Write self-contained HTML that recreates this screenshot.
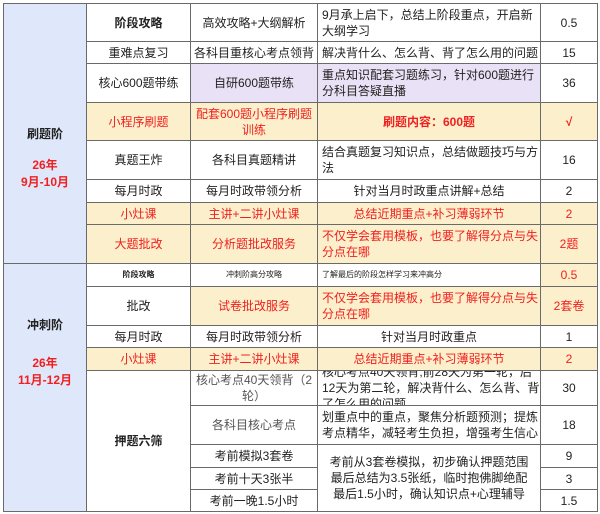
<!DOCTYPE html>
<html><head><meta charset="utf-8"><style>
body{margin:0;width:600px;height:514px;background:#fff;overflow:hidden;font-family:"Liberation Sans","Noto Sans CJK SC",sans-serif;}
#t{position:absolute;left:3px;top:3px;width:595px;height:509px;background:#6a6a6a;}
.c{position:absolute;background:#fff;display:flex;align-items:center;justify-content:center;text-align:center;font-size:12px;line-height:16px;color:#222;overflow:hidden;box-sizing:border-box;}
.l{justify-content:flex-start;text-align:left;padding-left:4px;}
.y{background:#fbf0cb;}
.p{background:#e9e1f6;}
.b{background:#dfe7fa;}
.r{color:#f02020;}
.bd{font-weight:bold;}
.s{font-size:8px;}
.a{position:absolute;left:0;width:82px;text-align:center;font-size:12px;line-height:16px;font-weight:bold;}
</style></head><body>
<div id="t"></div>
<div id="g"></div>
<script>
var X=[3,86,190,317,540,598];
var cells=[
[0,1,3,263,'<div class="a" style="top:122px;color:#222">刷题阶</div><div class="a r" style="top:153px">26年</div><div class="a r" style="top:170px">9月-10月</div>','b'],
[1,2,3,41,'阶段攻略','bd'],[2,3,3,41,'高效攻略+大纲解析',''],[3,4,3,41,'9月承上启下，总结上阶段重点，开启新大纲学习','l'],[4,5,3,41,'0.5',''],
[1,2,41,63,'重难点复习',''],[2,3,41,63,'各科目重核心考点领背',''],[3,4,41,63,'解决背什么、怎么背、背了怎么用的问题','l'],[4,5,41,63,'15',''],
[1,2,63,102,'核心600题带练',''],[2,3,63,102,'自研600题带练','p'],[3,4,63,102,'重点知识配套习题练习，针对600题进行分科目答疑直播','l p'],[4,5,63,102,'36',''],
[1,2,102,140,'小程序刷题','y r'],[2,3,102,140,'配套600题小程序刷题训练','y r'],[3,4,102,140,'刷题内容：600题','y r bd'],[4,5,102,140,'√','y r bd'],
[1,2,140,179,'真题王炸',''],[2,3,140,179,'各科目真题精讲',''],[3,4,140,179,'结合真题复习知识点，总结做题技巧与方法','l'],[4,5,140,179,'16',''],
[1,2,179,202,'每月时政',''],[2,3,179,202,'每月时政带领分析',''],[3,4,179,202,'针对当月时政重点讲解+总结',''],[4,5,179,202,'2',''],
[1,2,202,224,'小灶课','y r'],[2,3,202,224,'主讲+二讲小灶课','y r'],[3,4,202,224,'总结近期重点+补习薄弱环节','y r'],[4,5,202,224,'2','y r'],
[1,2,224,263,'大题批改','y r'],[2,3,224,263,'分析题批改服务','y r'],[3,4,224,263,'不仅学会套用模板，也要了解得分点与失分点在哪','l y r'],[4,5,224,263,'2题','y r'],
[0,1,263,511,'<div class="a" style="top:53px;color:#222">冲刺阶</div><div class="a r" style="top:91px">26年</div><div class="a r" style="top:108px">11月-12月</div>','b'],
[1,2,263,286,'阶段攻略','bd s'],[2,3,263,286,'冲刺阶高分攻略','s'],[3,4,263,286,'了解最后的阶段怎样学习来冲高分','l s'],[4,5,263,286,'0.5','y r'],
[1,2,286,325,'批改',''],[2,3,286,325,'试卷批改服务','y r'],[3,4,286,325,'不仅学会套用模板，也要了解得分点与失分点在哪','l y r'],[4,5,286,325,'2套卷','y r'],
[1,2,325,347,'每月时政',''],[2,3,325,347,'每月时政带领分析',''],[3,4,325,347,'针对当月时政重点',''],[4,5,325,347,'1',''],
[1,2,347,370,'小灶课','y r'],[2,3,347,370,'主讲+二讲小灶课','y r'],[3,4,347,370,'总结近期重点+补习薄弱环节','y r'],[4,5,347,370,'2','y r'],
[1,2,370,511,'押题六筛','bd'],
[2,3,370,405,'<span style="color:#555">核心考点40天领背（2轮）</span>',''],[3,4,370,405,'核心考点40天领背,前28天为第一轮，后12天为第二轮，解决背什么、怎么背、背了怎么用的问题','l'],[4,5,370,405,'30',''],
[2,3,405,444,'<span style="color:#555">各科目核心考点</span>',''],[3,4,405,444,'划重点中的重点，聚焦分析题预测；提炼考点精华，减轻考生负担，增强考生信心','l'],[4,5,405,444,'18',''],
[2,3,444,467,'考前模拟3套卷',''],[3,4,444,511,'考前从3套卷模拟，初步确认押题范围<br>最后总结为3.5张纸，临时抱佛脚绝配<br>最后1.5小时，确认知识点+心理辅导',''],[4,5,444,467,'9',''],
[2,3,467,489,'考前十天3张半',''],[4,5,467,489,'3',''],
[2,3,489,511,'考前一晚1.5小时',''],[4,5,489,511,'1.5','']
];
var h='';
cells.forEach(function(c){
var l=X[c[0]]+1,w=X[c[1]]-X[c[0]]-1,t=c[2]+1,hh=c[3]-c[2]-1;
if(c[1]==5)w=X[5]-X[c[0]]-2;
h+='<div class="c '+c[5]+'" style="left:'+l+'px;top:'+t+'px;width:'+w+'px;height:'+hh+'px">'+(c[5].indexOf('l')>=0?'<div>'+c[4]+'</div>':c[4])+'</div>';
});
document.getElementById('g').innerHTML=h;
</script>
</body></html>
